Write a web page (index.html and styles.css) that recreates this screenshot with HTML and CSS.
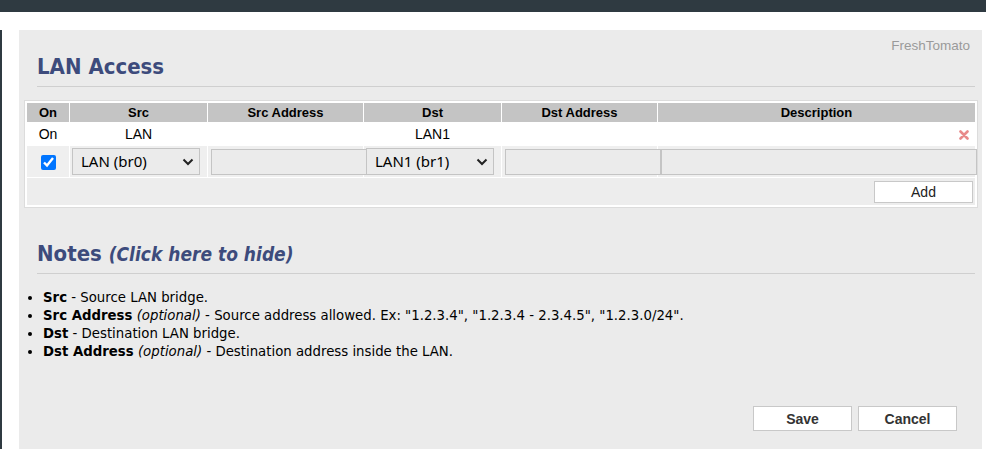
FILE: index.html
```html
<!DOCTYPE html>
<html lang="en">
<head>
    <meta charset="UTF-8">
    <title>LAN Access</title>
    <link rel="stylesheet" href="styles.css">
</head>
<body>
    <div class="topbar"></div>
    <div class="page">
        <div class="sidebar"></div>
        <div class="content">
            <div class="brand">FreshTomato</div>
            <h1 class="section-title">LAN Access</h1>

            <div class="grid-box">
                <table class="tomato-grid">
                    <tr class="header">
                        <td class="col-on">On</td>
                        <td class="col-src">Src</td>
                        <td class="col-srcaddr">Src Address</td>
                        <td class="col-dst">Dst</td>
                        <td class="col-dstaddr">Dst Address</td>
                        <td class="col-desc">Description</td>
                    </tr>
                    <tr class="data">
                        <td>On</td>
                        <td>LAN</td>
                        <td></td>
                        <td>LAN1</td>
                        <td></td>
                        <td class="del-cell">
                            <svg class="del" width="10" height="10" viewBox="0 0 10 10">
                                <path d="M1.5 1.5L8.5 8.5M8.5 1.5L1.5 8.5" stroke="#e88a8a" stroke-width="2.6" stroke-linecap="round"/>
                            </svg>
                        </td>
                    </tr>
                    <tr class="editor">
                        <td class="center"><input type="checkbox" class="check" checked></td>
                        <td>
                            <div class="select">LAN (br0)
                                <svg class="chev" width="12" height="8" viewBox="0 0 12 8"><path d="M1.5 1.5L6 6L10.5 1.5" fill="none" stroke="#222" stroke-width="2"/></svg>
                            </div>
                        </td>
                        <td><input type="text" class="field field-addr"></td>
                        <td>
                            <div class="select">LAN1 (br1)
                                <svg class="chev" width="12" height="8" viewBox="0 0 12 8"><path d="M1.5 1.5L6 6L10.5 1.5" fill="none" stroke="#222" stroke-width="2"/></svg>
                            </div>
                        </td>
                        <td><input type="text" class="field field-addr"></td>
                        <td><input type="text" class="field field-desc"></td>
                    </tr>
                    <tr class="footer">
                        <td colspan="6"><button class="btn-add">Add</button></td>
                    </tr>
                </table>
            </div>

            <h2 class="section-title notes-title">Notes <i class="hide-link">(Click here to hide)</i></h2>
            <ul class="notes">
                <li><b>Src</b> - Source LAN bridge.</li>
                <li><b>Src Address</b> <i>(optional)</i> - Source address allowed. Ex: "1.2.3.4", "1.2.3.4 - 2.3.4.5", "1.2.3.0/24".</li>
                <li><b>Dst</b> - Destination LAN bridge.</li>
                <li><b>Dst Address</b> <i>(optional)</i> - Destination address inside the LAN.</li>
            </ul>

            <div class="actions">
                <button class="btn">Save</button>
                <button class="btn">Cancel</button>
            </div>
        </div>
    </div>
</body>
</html>
```

FILE: styles.css
```css
body {
    margin: 0;
    background: #fff;
    font-family: "Liberation Sans", Arial, sans-serif;
    color: #000;
}
.topbar {
    height: 12px;
    background: #2f3a41;
}
.page {
    display: flex;
    padding-top: 18px;
}
.sidebar {
    width: 2px;
    background: #2f3a41;
    margin-right: 17px;
}
.content {
    width: 963px;
    height: 419px;
    background: #ebebeb;
    padding-top: 8px;
    box-sizing: border-box;
}
.brand {
    text-align: right;
    padding-right: 12px;
    font-size: 13.5px;
    line-height: 16px;
    color: #9a9a9a;
}
.section-title {
    margin: 0 7px 0 18px;
    font-family: "DejaVu Sans Condensed", "DejaVu Sans", sans-serif;
    font-stretch: condensed;
    font-weight: bold;
    font-size: 22px;
    line-height: 26px;
    color: #3d4b7c;
    border-bottom: 1px solid #cfcfcf;
    padding-bottom: 6px;
}
.grid-box {
    margin: 13px 4px 0 5px;
    border: 1px solid #dcdcdc;
    background: #fff;
    padding: 1px;
}
.tomato-grid {
    width: 100%;
    border-spacing: 1px;
    font-size: 14px;
    table-layout: fixed;
}
.tomato-grid td {
    padding: 0;
    text-align: center;
}
.header td {
    background: #c4c4c4;
    font-weight: bold;
    font-size: 13px;
    height: 19px;
}
.col-on { width: 42px; }
.col-src { width: 137px; }
.col-srcaddr { width: 155px; }
.col-dst { width: 137px; }
.col-dstaddr { width: 155px; }
.data td {
    height: 22px;
}
.del-cell {
    text-align: right !important;
}
.del {
    margin-right: 6px;
    vertical-align: middle;
}
.editor td {
    background: #efefef;
    height: 31px;
    text-align: left;
    padding-left: 2px;
}
.editor td.center {
    text-align: center;
    padding-left: 0;
}
.check {
    width: 15px;
    height: 15px;
    margin: 0;
    accent-color: #0075ff;
    vertical-align: middle;
}
.select {
    width: 128px;
    height: 27px;
    box-sizing: border-box;
    border: 1px solid #c4c4c4;
    background: #ebebeb;
    font-family: "Noto Sans", sans-serif;
    font-size: 15px;
    line-height: 25px;
    padding-left: 8px;
    position: relative;
}
.chev {
    position: absolute;
    right: 5px;
    top: 9px;
}
.field {
    height: 26px;
    box-sizing: border-box;
    border: 1px solid #c4c4c4;
    background: #ebebeb;
    margin: 0;
    padding: 0 4px;
    vertical-align: middle;
}
.field-addr {
    width: 156px;
    margin-left: 1px;
}
.field-desc {
    width: 316px;
    margin-left: 1px;
}
.footer td {
    background: #ededed;
    height: 27px;
    text-align: right;
    padding-right: 2px;
}
.btn-add {
    width: 99px;
    height: 22px;
    border: 1px solid #c8c8c8;
    background: #fff;
    font-family: "Liberation Sans", Arial, sans-serif;
    font-size: 14px;
    color: #222;
    margin-top: 0;
}
.notes-title {
    margin-top: 33px;
    font-size: 22px;
}
.hide-link {
    font-size: 19px;
    cursor: pointer;
}
.notes {
    margin: 15px 0 0;
    padding-left: 24px;
    font-family: "DejaVu Sans", sans-serif;
    font-size: 13.3px;
    line-height: 18px;
}
.notes b {
    font-weight: bold;
}
.actions {
    display: flex;
    justify-content: flex-end;
    gap: 6px;
    margin: 45px 25px 0 0;
}
.btn {
    width: 99px;
    height: 25px;
    border: 1px solid #c8c8c8;
    background: #fff;
    font-family: "Liberation Sans", Arial, sans-serif;
    font-weight: bold;
    font-size: 14px;
    color: #333;
}
```
